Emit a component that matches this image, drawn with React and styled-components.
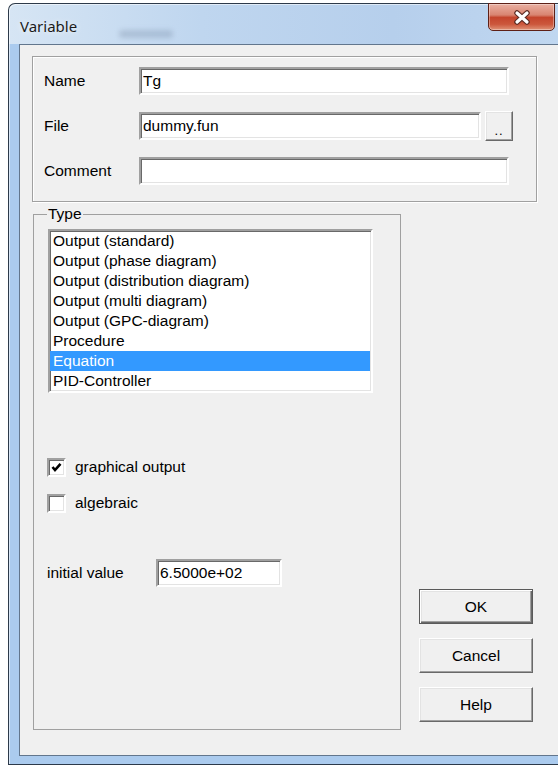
import React from "react";
import styled, { createGlobalStyle } from "styled-components";

const Global = createGlobalStyle`
  html, body { margin: 0; padding: 0; background: #fff; overflow: hidden; }
  body { font-family: "Liberation Sans", Arial, sans-serif; }
`;

/* the dialog runs on past the right edge of the page, so its right frame is not drawn */
const Window = styled.div`
  box-sizing: border-box;
  width: 550px;
  height: 762px;
  margin: 3px 0 0 8px;
  border: 1px solid #2d3a4a;
  border-right: none;
  border-radius: 7px 0 0 0;
  padding: 0 0 8px 10px;
  display: flex;
  flex-direction: column;
  background:
    linear-gradient(to bottom, rgba(171, 203, 238, 0) 0, rgba(171, 203, 238, 0) 40px, #abcbee 40px),
    linear-gradient(to right, #d6e5f4 0%, #bfd6ef 35%, #b6cfec 70%, #c0d7f0 100%);
  box-shadow: inset 1px 1px 0 rgba(255, 255, 255, 0.55);
`;

const TitleBar = styled.div`
  height: 40px;
  flex: none;
  display: flex;
  align-items: flex-start;
`;

const Title = styled.span`
  flex: none;
  margin: 12px 0 0 1px;
  font: 15px/20px "Noto Sans", "Open Sans", sans-serif;
  color: #1b1b1b;
  text-shadow: 0 0 6px rgba(255, 255, 255, 0.9);
`;

const Haze = styled.span`
  flex: none;
  width: 54px;
  height: 8px;
  margin: 26px 0 0 42px;
  border-radius: 4px;
  background: rgba(110, 130, 155, 0.3);
  filter: blur(2.5px);
`;

const CloseButton = styled.div`
  flex: none;
  box-sizing: border-box;
  width: 67px;
  height: 28px;
  margin: -1px 3px 0 auto;
  border: 1px solid #5e2016;
  border-radius: 0 0 5px 5px;
  display: flex;
  align-items: center;
  justify-content: center;
  background: linear-gradient(to bottom, #eab0a2 0%, #d98571 42%, #c4452c 52%, #cc573c 78%, #df9377 100%);
  box-shadow: inset 0 0 0 1px rgba(255, 255, 255, 0.35);
`;

const Client = styled.div`
  flex: 1;
  box-sizing: border-box;
  border: 1px solid #62768d;
  border-right: none;
  background: #f0f0f0;
  padding: 11px 0 0 12px;
  display: flex;
  flex-direction: column;
  font-size: 15.5px;
  color: #000;
`;

const FieldsGroup = styled.div`
  box-sizing: border-box;
  width: 505px;
  height: 146px;
  border: 1px solid #a0a0a0;
  box-shadow: inset 1px 1px 0 #fff, 1px 1px 0 #fff;
  padding: 10px 0 0 11px;
  display: flex;
  flex-direction: column;
  gap: 16px;
`;

const Row = styled.div`
  display: flex;
  align-items: center;
  height: ${(p) => p.$h || 28}px;
`;

const Label = styled.span`
  width: ${(p) => p.$w || 95}px;
  flex: none;
`;

const TextBox = styled.input`
  box-sizing: border-box;
  width: ${(p) => p.$w}px;
  height: 28px;
  margin: 0;
  padding: 0 2px;
  border: 2px solid;
  border-color: #a0a0a0 #fff #fff #a0a0a0;
  box-shadow: inset 1px 1px 0 #696969, inset -1px -1px 0 #e3e3e3;
  background: #fff;
  font: inherit;
  color: #000;
  outline: none;
`;

const Raised = styled.button`
  box-sizing: border-box;
  margin: 0;
  padding: 0;
  background: #f0f0f0;
  font: inherit;
  color: #000;
  border: 1px solid;
  border-color: #fff #696969 #696969 #fff;
  box-shadow: inset -1px -1px 0 #a0a0a0, inset 1px 1px 0 #e3e3e3;
`;

const BrowseButton = styled(Raised)`
  width: 28px;
  height: 30px;
  margin-left: 4px;
  line-height: 1;
  padding-top: 8px;
  font-size: 13px;
  letter-spacing: 1px;
`;

const BottomArea = styled.div`
  display: flex;
  margin-top: 3px;
`;

const TypeGroup = styled.fieldset`
  box-sizing: border-box;
  width: 368px;
  height: 525px;
  margin: 0 0 0 1px;
  padding: 0;
  border: 1px solid #a0a0a0;
  min-inline-size: 0;
`;

const Legend = styled.legend`
  margin-left: 13px;
  padding: 0 1px;
  line-height: 18px;
`;

const TypeBody = styled.div`
  padding: 6px 0 0 13px;
  display: flex;
  flex-direction: column;
`;

const ListBox = styled.div`
  box-sizing: border-box;
  width: 325px;
  height: 164px;
  margin-left: 1px;
  border: 2px solid;
  border-color: #a0a0a0 #fff #fff #a0a0a0;
  box-shadow: inset 1px 1px 0 #696969, inset -1px -1px 0 #e3e3e3;
  background: #fff;
`;

const ListItem = styled.div`
  height: 20px;
  line-height: 20px;
  padding-left: 3px;
  margin-right: 1px;
  white-space: nowrap;
  background: ${(p) => (p.$selected ? "#3399ff" : "transparent")};
  color: ${(p) => (p.$selected ? "#fff" : "#000")};
`;

const CheckRow = styled.div`
  display: flex;
  align-items: center;
  height: 20px;
  margin-top: ${(p) => p.$top}px;
`;

const CheckBox = styled.span`
  box-sizing: border-box;
  width: 19px;
  height: 19px;
  flex: none;
  border: 2px solid;
  border-color: #a0a0a0 #fff #fff #a0a0a0;
  box-shadow: inset 1px 1px 0 #696969, inset -1px -1px 0 #e3e3e3;
  background: #fff;
  display: flex;
  align-items: center;
  justify-content: center;
`;

const CheckLabel = styled.span`
  margin-left: 9px;
`;

const ValueRow = styled(Row)`
  margin-top: 46px;
`;

const ButtonColumn = styled.div`
  display: flex;
  flex-direction: column;
  justify-content: flex-end;
  gap: 14px;
  margin-left: 18px;
  padding-bottom: 8px;
`;

const DialogButton = styled(Raised)`
  width: 114px;
  height: 35px;
  ${(p) =>
    p.$default &&
    `
    border: 1px solid #5a5a5a;
    box-shadow: inset 1px 1px 0 #fff, inset -1px -1px 0 #696969, inset -2px -2px 0 #a0a0a0, inset 2px 2px 0 #e3e3e3;
  `}
`;

const types = [
  "Output (standard)",
  "Output (phase diagram)",
  "Output (distribution diagram)",
  "Output (multi diagram)",
  "Output (GPC-diagram)",
  "Procedure",
  "Equation",
  "PID-Controller",
];

const CloseGlyph = () => (
  <svg width="18" height="15" viewBox="0 0 18 15">
    <path d="M4 3 L14 12 M14 3 L4 12" stroke="#5a2a22" strokeWidth="5.5" strokeLinecap="round" />
    <path d="M4 3 L14 12 M14 3 L4 12" stroke="#fff" strokeWidth="3.2" strokeLinecap="round" />
  </svg>
);

const Tick = () => (
  <svg width="11" height="11" viewBox="0 0 11 11">
    <path d="M1.5 5 L4 8 L9.5 1.8" fill="none" stroke="#000" strokeWidth="2.6" />
  </svg>
);

export default function App() {
  return (
    <>
      <Global />
      <Window>
        <TitleBar>
          <Title>Variable</Title>
          <Haze />
          <CloseButton>
            <CloseGlyph />
          </CloseButton>
        </TitleBar>
        <Client>
          <FieldsGroup>
            <Row>
              <Label>Name</Label>
              <TextBox $w={370} defaultValue="Tg" readOnly />
            </Row>
            <Row $h={30}>
              <Label>File</Label>
              <TextBox $w={342} defaultValue="dummy.fun" readOnly />
              <BrowseButton>..</BrowseButton>
            </Row>
            <Row>
              <Label>Comment</Label>
              <TextBox $w={370} defaultValue="" readOnly />
            </Row>
          </FieldsGroup>
          <BottomArea>
            <TypeGroup>
              <Legend>Type</Legend>
              <TypeBody>
                <ListBox>
                  {types.map((t) => (
                    <ListItem key={t} $selected={t === "Equation"}>
                      {t}
                    </ListItem>
                  ))}
                </ListBox>
                <CheckRow $top={64}>
                  <CheckBox>
                    <Tick />
                  </CheckBox>
                  <CheckLabel>graphical output</CheckLabel>
                </CheckRow>
                <CheckRow $top={16}>
                  <CheckBox />
                  <CheckLabel>algebraic</CheckLabel>
                </CheckRow>
                <ValueRow>
                  <Label $w={109}>initial value</Label>
                  <TextBox $w={126} defaultValue="6.5000e+02" readOnly />
                </ValueRow>
              </TypeBody>
            </TypeGroup>
            <ButtonColumn>
              <DialogButton $default>OK</DialogButton>
              <DialogButton>Cancel</DialogButton>
              <DialogButton>Help</DialogButton>
            </ButtonColumn>
          </BottomArea>
        </Client>
      </Window>
    </>
  );
}
